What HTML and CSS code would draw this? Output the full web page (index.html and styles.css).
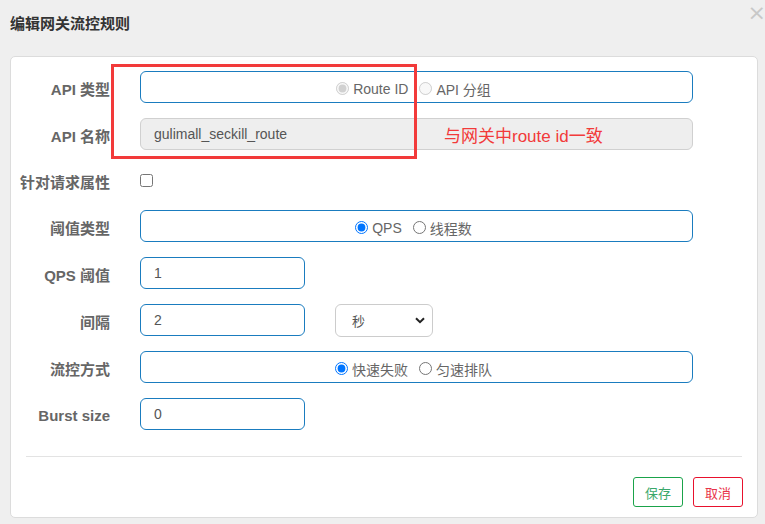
FILE: index.html
```html
<!DOCTYPE html>
<html lang="zh-CN">
<head>
<meta charset="utf-8">
<title>编辑网关流控规则</title>
<link rel="stylesheet" href="styles.css">
</head>
<body>
<div class="dialog">
  <div class="header">
    <h3 class="title">编辑网关流控规则</h3>
    <span class="close">×</span>
  </div>
  <div class="card">
    <div class="row">
      <label class="lbl">API 类型</label>
      <div class="field wide radios">
        <label class="opt"><input type="radio" name="t" checked disabled>Route ID</label>
        <label class="opt gap"><input type="radio" name="t" disabled>API 分组</label>
      </div>
    </div>
    <div class="row">
      <label class="lbl">API 名称</label>
      <div class="field wide disabled">gulimall_seckill_route</div>
    </div>
    <div class="row row-check">
      <label class="lbl">针对请求属性</label>
      <input type="checkbox" class="check">
    </div>
    <div class="row">
      <label class="lbl">阈值类型</label>
      <div class="field wide radios">
        <label class="opt"><input type="radio" name="g" checked>QPS</label>
        <label class="opt gap"><input type="radio" name="g">线程数</label>
      </div>
    </div>
    <div class="row">
      <label class="lbl">QPS 阈值</label>
      <div class="field small">1</div>
    </div>
    <div class="row">
      <label class="lbl">间隔</label>
      <div class="field small">2</div>
      <div class="select"><span>秒</span><svg class="chev" width="10" height="7" viewBox="0 0 10 7"><path d="M1 1.2 L5 5.2 L9 1.2" fill="none" stroke="#222" stroke-width="2"/></svg></div>
    </div>
    <div class="row">
      <label class="lbl">流控方式</label>
      <div class="field wide radios">
        <label class="opt"><input type="radio" name="c" checked>快速失败</label>
        <label class="opt gap"><input type="radio" name="c">匀速排队</label>
      </div>
    </div>
    <div class="row">
      <label class="lbl">Burst size</label>
      <div class="field small">0</div>
    </div>
    <div class="sep"></div>
    <div class="actions">
      <button class="btn save">保存</button>
      <button class="btn cancel">取消</button>
    </div>
  </div>
  <div class="mark"></div>
  <div class="note">与网关中route id一致</div>
</div>
</body>
</html>
```
FILE: styles.css
```css
html, body {
  margin: 0;
  padding: 0;
  background: #efefef;
  font-family: "Liberation Sans", "Noto Sans CJK SC", sans-serif;
  color: #555;
}
.dialog {
  position: relative;
  width: 765px;
  height: 524px;
}
.header {
  position: relative;
  height: 56px;
}
.title {
  margin: 0;
  padding: 14px 0 0 10px;
  font-size: 15px;
  line-height: 20px;
  font-weight: bold;
  color: #333;
}
.close {
  position: absolute;
  right: -1px;
  top: 0px;
  font-size: 22px;
  line-height: 26px;
  color: #c8c8c8;
  font-family: "DejaVu Sans", sans-serif;
}
.card {
  margin: 0 7px 0 10px;
  height: 462px;
  box-sizing: border-box;
  background: #fff;
  border: 1px solid #dcdcdc;
  border-radius: 5px;
  padding-top: 14px;
}
.row {
  display: flex;
  align-items: center;
  height: 32px;
  margin-bottom: 15px;
}
.row-check {
  height: 30px;
}
.lbl {
  width: 99px;
  flex-shrink: 0;
  margin-right: 30px;
  padding-top: 2px;
  text-align: right;
  font-weight: bold;
  font-size: 15px;
  color: #666;
  white-space: nowrap;
  direction: rtl;
}
.field {
  box-sizing: border-box;
  height: 32px;
  border: 1px solid #1a7cbf;
  border-radius: 6px;
  background: #fff;
  font-size: 14px;
  color: #555;
  padding: 0 13px;
  display: flex;
  align-items: center;
}
.wide {
  width: 553px;
}
.small {
  width: 165px;
}
.disabled {
  background: #eee;
  border-color: #d0d0d0;
}
.radios {
  justify-content: center;
  padding-left: 0;
  padding-right: 6px;
  padding-top: 3px;
}
.opt {
  display: inline-flex;
  align-items: center;
  font-size: 14px;
  color: #666;
  white-space: nowrap;
}
.opt input {
  margin: 0 4px 0 0;
  width: 13px;
  height: 13px;
}
.opt.gap {
  margin-left: 11px;
}
.check {
  margin: 0;
  width: 13px;
  height: 13px;
}
.select {
  margin-left: 30px;
  box-sizing: border-box;
  width: 98px;
  height: 33px;
  border: 1px solid #ccc;
  border-radius: 6px;
  display: flex;
  align-items: center;
  justify-content: space-between;
  padding: 0 7px 0 16px;
  font-size: 13px;
  color: #555;
}
.sep {
  margin: 26px 15px 0 15px;
  height: 1px;
  background: #e3e3e3;
}
.actions {
  display: flex;
  justify-content: flex-end;
  gap: 10px;
  margin: 20px 14px 0 0;
}
.btn {
  width: 50px;
  height: 30px;
  background: #fff;
  border-radius: 3px;
  font-size: 13px;
  font-family: "Noto Sans CJK SC", sans-serif;
  padding: 0;
}
.save {
  border: 1px solid #1aa34a;
  color: #3aa86b;
}
.cancel {
  border: 1px solid #e8112d;
  color: #e8334a;
}
.mark {
  position: absolute;
  left: 111px;
  top: 64px;
  width: 300px;
  height: 89px;
  border: 3px solid #f23a3a;
}
.note {
  position: absolute;
  left: 444px;
  top: 125px;
  font-size: 17px;
  line-height: 24px;
  color: #f23a3a;
  font-family: "Liberation Sans", "Noto Sans CJK SC", sans-serif;
}
```
